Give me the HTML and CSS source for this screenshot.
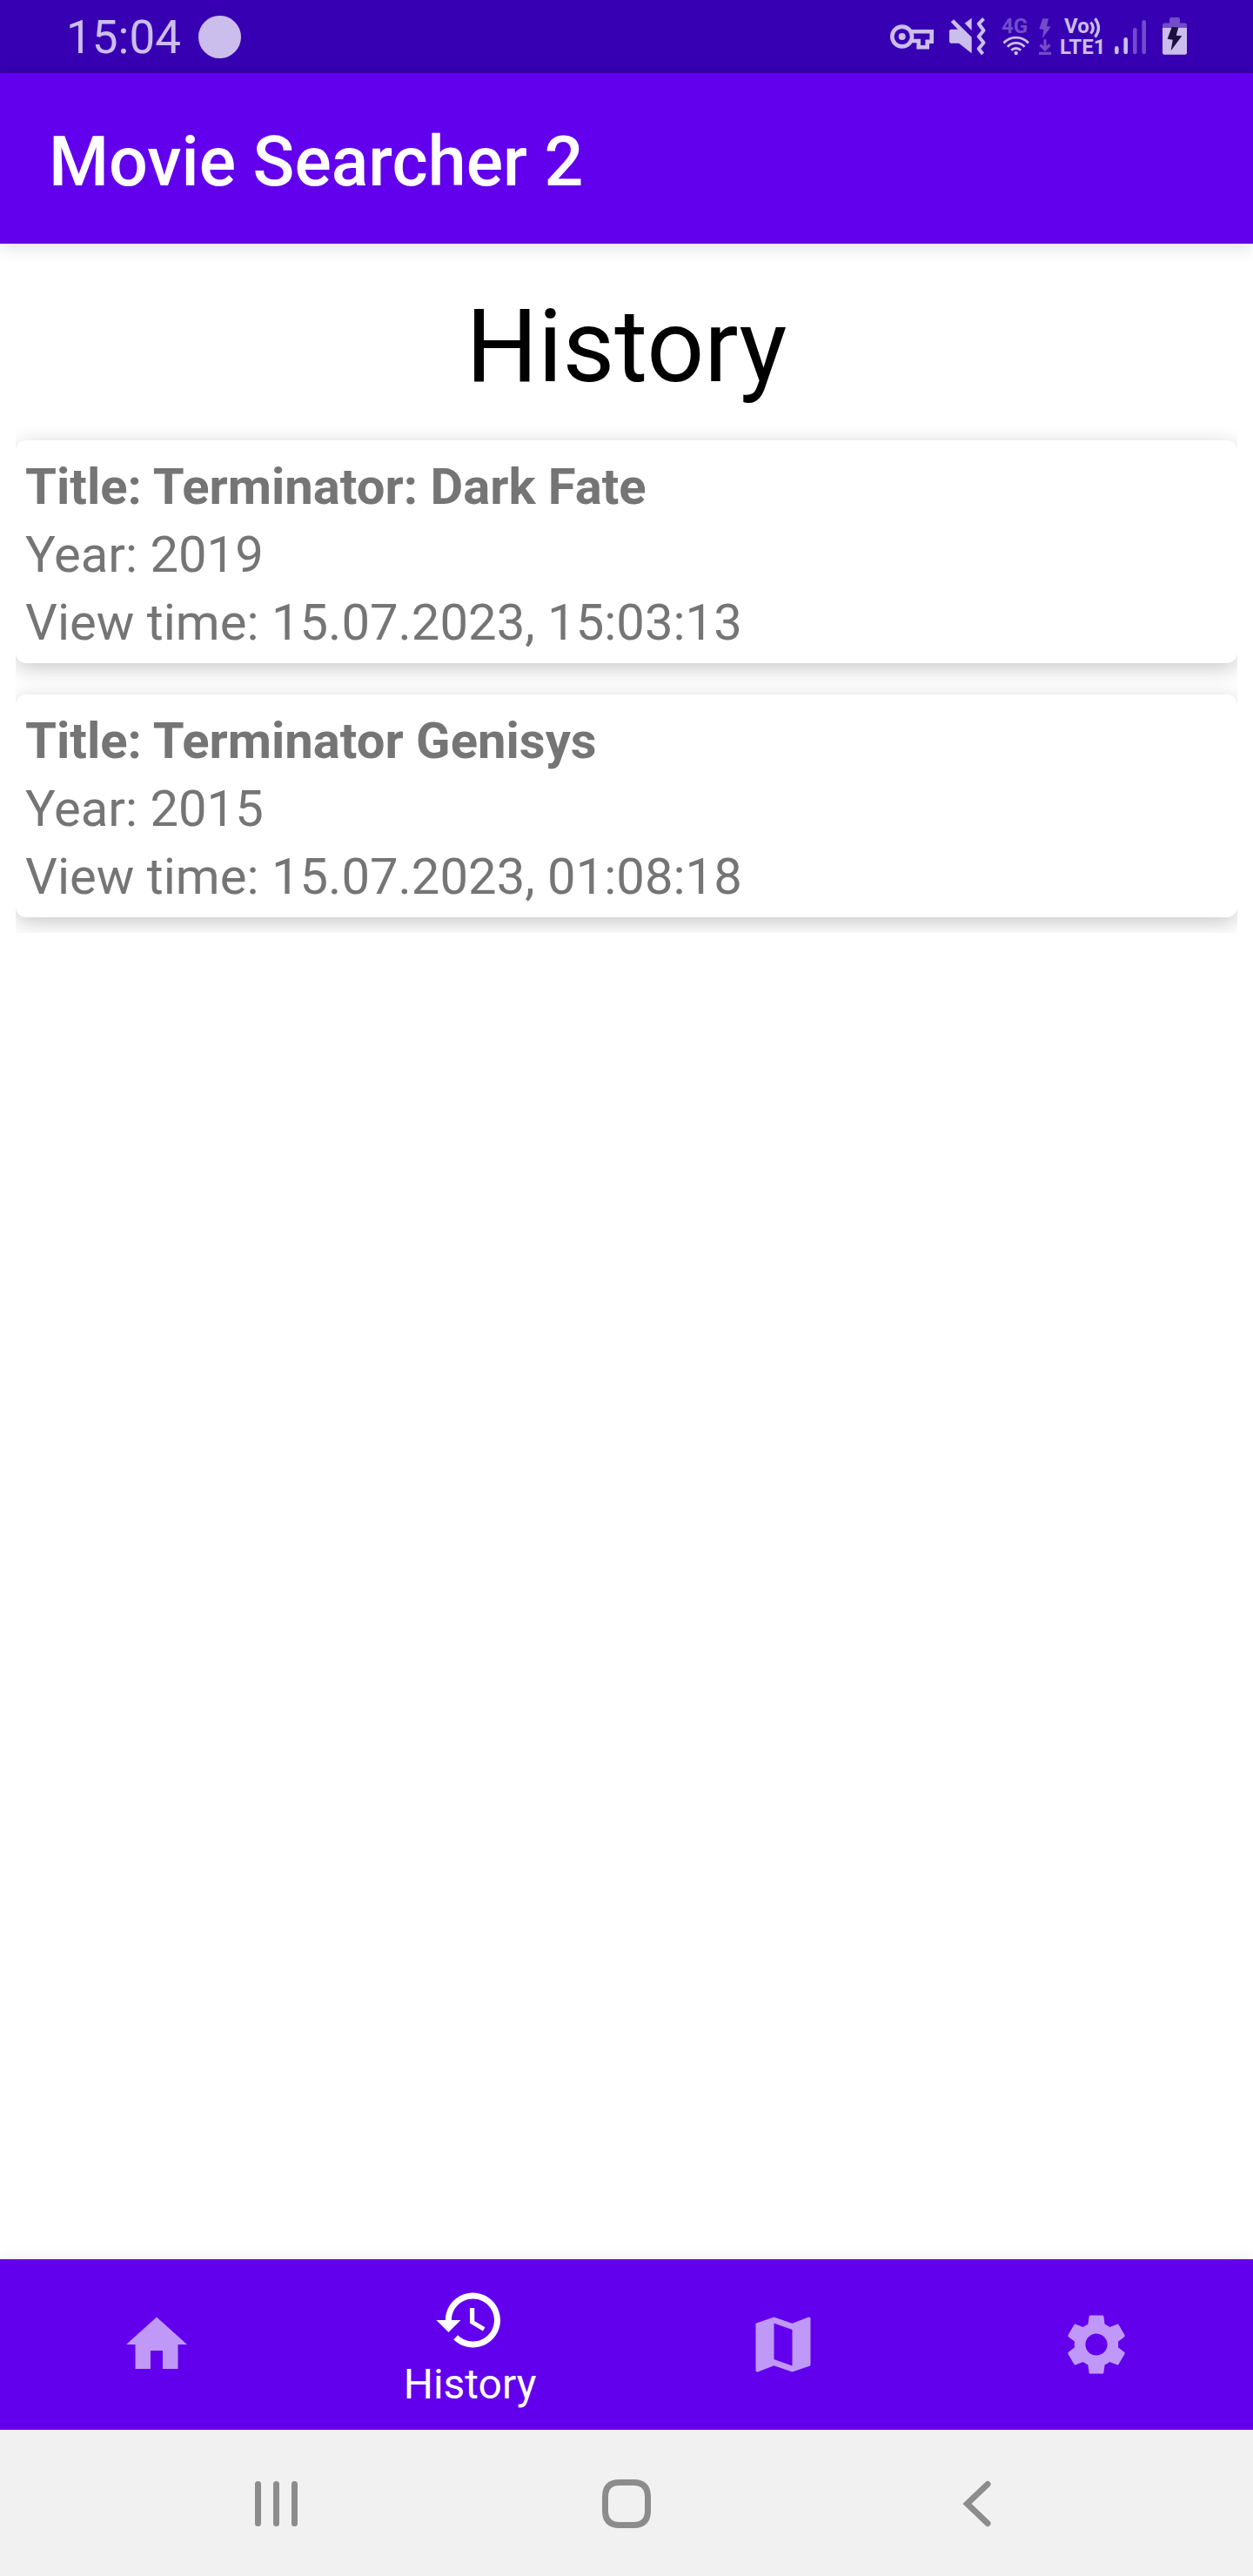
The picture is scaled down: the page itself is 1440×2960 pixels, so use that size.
FILE: index.html
```html
<!DOCTYPE html>
<html lang="en">
<head>
  <meta charset="utf-8">
  <meta name="viewport" content="width=device-width, initial-scale=1">
  <title>Movie Searcher 2</title>
  <link rel="stylesheet" href="styles.css">
</head>
<body>
  <div class="status-bar">
    <time class="status-time">15:04</time>
    <span class="status-dot"></span>
    <div class="status-icons">
      <svg width="56" height="48" viewBox="0 0 56 48" fill="none" stroke="currentColor" stroke-width="4.6">
        <circle cx="13.7" cy="24" r="11.4"/>
        <circle cx="13.7" cy="24" r="4" fill="currentColor" stroke="none"/>
        <path d="M23 18.3H47.7V29.7H42.7V36.3H32.7V29H23"/>
      </svg>
      <svg width="50" height="48" viewBox="0 0 50 48" fill="currentColor">
        <path d="M2.5 15.7H10.7L2.7 7.3L6 4.3L26.7 24.7V43.3L12 31.7H2.5L1 30V17Z"/>
        <path d="M18.7 8.7L26.7 2.7V17Z"/>
        <path d="M40.5 3.5L34.7 9.3L40.5 17L34.7 24L40.5 31L34.7 38L39.5 44" fill="none" stroke="currentColor" stroke-width="4" stroke-linejoin="round"/>
      </svg>
      <svg width="32" height="48" viewBox="0 0 32 48" fill="none" stroke="currentColor" stroke-width="2.8">
        <text class="status-label dim" x="0" y="20">4G</text>
        <path d="M2.5 31.5A19 19 0 0 1 30.9 31.5M6.9 35.8A13 13 0 0 1 26.5 35.8M11.3 39.8A7.5 7.5 0 0 1 22.1 39.8"/>
        <circle cx="16.7" cy="43" r="2.2" fill="currentColor" stroke="none"/>
      </svg>
      <svg class="dim" width="14" height="48" viewBox="0 0 14 48" fill="currentColor">
        <path d="M4.3 3.3H11L9 12L13.7 12.7L4 26L5.3 16L.3 15.3Z"/>
        <path d="M7 27.3V39M1.5 33.5L7 39L12.5 33.5M0 43.3H14" fill="none" stroke="currentColor" stroke-width="3.2"/>
      </svg>
      <svg width="51" height="48" viewBox="0 0 51 48" fill="none" stroke="currentColor" stroke-width="3.2">
        <text class="status-label" x="4" y="20">Vo</text>
        <path d="M34.500 7.5Q40 14 34.500 20.5M39.500 3.3Q47.500 14 39.500 24.5"/>
        <text class="status-label" x="-1" y="44">LTE1</text>
      </svg>
      <svg width="44" height="48" viewBox="0 0 44 48" fill="currentColor">
        <rect x="0" y="35" width="4.6" height="9.3" rx="2.3"/>
        <rect x="10.4" y="25" width="4.6" height="19.3" rx="2.3"/>
        <rect class="dim" x="21" y="14" width="4.6" height="30.3" rx="2.3"/>
        <rect class="dim" x="31.4" y="5" width="4.6" height="39.3" rx="2.3"/>
      </svg>
      <svg width="28" height="48" viewBox="0 0 28 48" fill="currentColor">
        <path class="dim" d="M8 8.5V4Q8 2 10 2H18Q20 2 20 4V8.5H26Q28 8.5 28 10.5V14H0V10.5Q0 8.5 2 8.5Z"/>
        <path d="M0 14H28V42.5Q28 44.7 26 44.7H2Q0 44.7 0 42.5Z"/>
        <path class="bolt" d="M10.7 13L18.3 13.5L15.7 22.7L22.3 23.3L9.7 40.3L11.7 27.7L5.7 26.7Z"/>
      </svg>
    </div>
  </div>

  <header class="app-bar">
    <h1 class="app-title">Movie Searcher 2</h1>
  </header>

  <main class="content">
    <h2 class="page-title">History</h2>
    <ul class="history-list">
      <li class="card">
        <h3 class="card-title">Title: Terminator: Dark Fate</h3>
        <p class="card-line">Year: 2019</p>
        <p class="card-line">View time: 15.07.2023, 15:03:13</p>
      </li>
      <li class="card">
        <h3 class="card-title">Title: Terminator Genisys</h3>
        <p class="card-line">Year: 2015</p>
        <p class="card-line">View time: 15.07.2023, 01:08:18</p>
      </li>
    </ul>
  </main>

  <nav class="tab-bar" aria-label="Main">
    <a class="tab" href="#home" aria-label="Home">
      <svg class="tab-icon" viewBox="0 0 24 24"><path d="M10 20v-6h4v6h5v-8h3L12 3 2 12h3v8z"/></svg>
    </a>
    <a class="tab tab-active" href="#history" aria-current="page">
      <svg class="tab-icon" viewBox="0 0 24 24"><path d="M13 3c-4.97 0-9 4.03-9 9H1l3.89 3.89.07.14L9 12H6c0-3.87 3.13-7 7-7s7 3.13 7 7-3.13 7-7 7c-1.93 0-3.68-.79-4.94-2.06l-1.42 1.42C8.27 19.99 10.51 21 13 21c4.97 0 9-4.03 9-9s-4.03-9-9-9zm-1 5v5l4.28 2.54.72-1.21-3.5-2.08V8H12z"/></svg>
      <span class="tab-label">History</span>
    </a>
    <a class="tab" href="#map" aria-label="Map">
      <svg class="tab-icon" viewBox="0 0 24 24"><path d="M20.5 3l-.16.03L15 5.1 9 3 3.36 4.9c-.21.07-.36.25-.36.48V20.5c0 .28.22.5.5.5l.16-.03L9 18.9l6 2.1 5.64-1.9c.21-.07.36-.25.36-.48V3.5c0-.28-.22-.5-.5-.5zM15 19l-6-2.11V5l6 2.11V19z"/></svg>
    </a>
    <a class="tab" href="#settings" aria-label="Settings">
      <svg class="tab-icon" viewBox="0 0 24 24"><path d="M19.14 12.94c.04-.3.06-.61.06-.94 0-.32-.02-.64-.07-.94l2.03-1.58c.18-.14.23-.41.12-.61l-1.92-3.32c-.12-.22-.37-.29-.59-.22l-2.39.96c-.5-.38-1.03-.7-1.62-.94l-.36-2.54c-.04-.24-.24-.41-.48-.41h-3.84c-.24 0-.43.17-.47.41l-.36 2.54c-.59.24-1.13.57-1.62.94l-2.39-.96c-.22-.08-.47 0-.59.22L2.74 8.87c-.12.21-.08.47.12.61l2.03 1.58c-.05.3-.09.63-.09.94s.02.64.07.94l-2.03 1.58c-.18.14-.23.41-.12.61l1.92 3.32c.12.22.37.29.59.22l2.39-.96c.5.38 1.03.7 1.62.94l.36 2.54c.05.24.24.41.48.41h3.84c.24 0 .44-.17.47-.41l.36-2.54c.59-.24 1.13-.56 1.62-.94l2.39.96c.22.08.47 0 .59-.22l1.92-3.32c.12-.22.07-.47-.12-.61l-2.01-1.58zM12 15.6c-1.98 0-3.6-1.62-3.6-3.6s1.62-3.6 3.6-3.6 3.6 1.62 3.6 3.6-1.62 3.6-3.6 3.6z"/></svg>
    </a>
  </nav>

  <div class="system-nav">
    <button class="system-button" type="button" aria-label="Recent apps">
      <svg width="60" height="60" viewBox="0 0 60 60"><path d="M9.5 7.5V52.5M30.5 7.5V52.5M51.5 7.5V52.5"/></svg>
    </button>
    <button class="system-button" type="button" aria-label="Home screen">
      <svg width="60" height="60" viewBox="0 0 60 60"><path d="M22 5.5H38Q54.500 5.500 54.500 22V38Q54.500 54.500 38 54.500H22Q5.500 54.500 5.500 38V22Q5.500 5.500 22 5.500Z"/></svg>
    </button>
    <button class="system-button" type="button" aria-label="Back">
      <svg width="60" height="60" viewBox="0 0 60 60"><path d="M42 7.500L18.500 30L42 52.500"/></svg>
    </button>
  </div>
</body>
</html>
```
FILE: styles.css
```css
* {
  box-sizing: border-box;
}

body {
  margin: 0;
  min-height: 100vh;
  display: flex;
  flex-direction: column;
  background: #fff;
  color: #757575;
  font-family: Roboto, "Liberation Sans", sans-serif;
}

h1, h2, h3, p, ul {
  margin: 0;
  padding: 0;
}

svg {
  display: block;
  overflow: visible;
}

/* Device status bar */
.status-bar {
  display: flex;
  align-items: center;
  height: 84px;
  padding: 0 76px;
  background: #3700b3;
  color: #cbbeec;
}

.status-time {
  padding-top: 2px;
  font-size: 53px;
  line-height: 84px;
}

.status-dot {
  width: 49px;
  height: 49px;
  margin-left: 20px;
  border-radius: 50%;
  background: currentColor;
}

.status-icons {
  display: flex;
  gap: 11px;
  margin-left: auto;
}

.status-label {
  fill: currentColor;
  stroke: none;
  font-size: 24px;
  font-weight: 700;
}

.dim {
  opacity: 0.4;
}

.bolt {
  fill: #1c1040;
}

/* App bar */
.app-bar {
  display: flex;
  align-items: center;
  height: 196px;
  padding: 8px 56px 0;
  background: #6200ee;
  color: #fff;
  box-shadow: 0 2px 20px rgba(0, 0, 0, 0.16);
}

.app-title {
  font-size: 79px;
  font-weight: 500;
  line-height: 92px;
}

/* Page */
.content {
  flex: 1;
}

.page-title {
  padding-top: 50px;
  color: #000;
  font-size: 116px;
  font-weight: 400;
  line-height: 136px;
  text-align: center;
}

.history-list {
  display: flex;
  flex-direction: column;
  gap: 36px;
  margin: 22px 18px 0;
  padding: 18px 0;
  overflow: hidden;
  list-style: none;
}

.card {
  padding: 14px 11px 8px;
  border-radius: 12px;
  background: #fff;
  box-shadow: 0 6px 24px rgba(0, 0, 0, 0.22);
}

.card-title,
.card-line {
  font-size: 58px;
  font-weight: 400;
  line-height: 78px;
}

.card-title {
  font-weight: 700;
}

/* Bottom tabs */
.tab-bar {
  display: grid;
  grid-template-columns: repeat(4, 1fr);
  height: 196px;
  background: #6200ee;
  box-shadow: 0 0 20px rgba(0, 0, 0, 0.08);
}

.tab {
  display: flex;
  flex-direction: column;
  align-items: center;
  justify-content: center;
  color: #c099f8;
  text-decoration: none;
}

.tab-active {
  gap: 4px;
  padding-top: 4px;
  color: #fff;
}

.tab-icon {
  width: 84px;
  height: 84px;
  fill: currentColor;
}

.tab-label {
  font-size: 48px;
  line-height: 56px;
}

/* Device navigation */
.system-nav {
  display: grid;
  grid-template-columns: repeat(3, 1fr);
  height: 168px;
  padding: 2px 8% 0;
  background: #f1f1f1;
}

.system-button {
  display: flex;
  align-items: center;
  justify-content: center;
  padding: 0;
  border: 0;
  background: none;
  color: #8c8c8c;
}

.system-button svg {
  fill: none;
  stroke: currentColor;
  stroke-width: 7;
  stroke-linecap: round;
  stroke-linejoin: miter;
}
```
